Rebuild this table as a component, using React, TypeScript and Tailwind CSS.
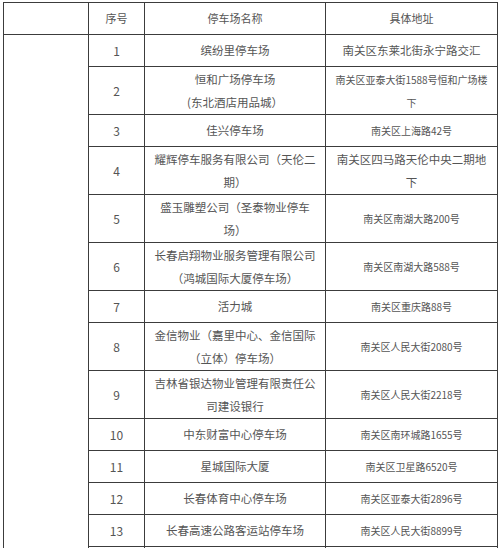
import React from "react";

type Row = {
  no: string;
  name: React.ReactNode;
  addr: React.ReactNode;
  big?: boolean;
  tall?: boolean;
};

const rows: Row[] = [
  { no: "1", name: "缤纷里停车场", addr: "南关区东莱北街永宁路交汇", big: true },
  {
    no: "2",
    name: (
      <>
        恒和广场停车场
        <br />
        (东北酒店用品城）
      </>
    ),
    addr: (
      <>
        南关区亚泰大街1588号恒和广场楼
        <br />下
      </>
    ),
    tall: true,
  },
  { no: "3", name: "佳兴停车场", addr: "南关区上海路42号" },
  {
    no: "4",
    name: (
      <>
        耀辉停车服务有限公司（天伦二
        <br />
        期）
      </>
    ),
    addr: (
      <>
        南关区四马路天伦中央二期地
        <br />下
      </>
    ),
    big: true,
    tall: true,
  },
  {
    no: "5",
    name: (
      <>
        盛玉雕塑公司（圣泰物业停车
        <br />
        场）
      </>
    ),
    addr: "南关区南湖大路200号",
    tall: true,
  },
  {
    no: "6",
    name: (
      <>
        长春启翔物业服务管理有限公司
        <br />
        （鸿城国际大厦停车场）
      </>
    ),
    addr: "南关区南湖大路588号",
    tall: true,
  },
  { no: "7", name: "活力城", addr: "南关区重庆路88号" },
  {
    no: "8",
    name: (
      <>
        金信物业（嘉里中心、金信国际
        <br />
        （立体）停车场）
      </>
    ),
    addr: "南关区人民大街2080号",
    tall: true,
  },
  {
    no: "9",
    name: (
      <>
        吉林省银达物业管理有限责任公
        <br />
        司建设银行
      </>
    ),
    addr: "南关区人民大街2218号",
    tall: true,
  },
  { no: "10", name: "中东财富中心停车场", addr: "南关区南环城路1655号" },
  { no: "11", name: "星城国际大厦", addr: "南关区卫星路6520号" },
  { no: "12", name: "长春体育中心停车场", addr: "南关区亚泰大街2896号" },
  { no: "13", name: "长春高速公路客运站停车场", addr: "南关区人民大街8899号" },
];

const cell = "border border-[#3c3c3c] text-center align-middle p-0";

export default function App() {
  return (
    <div
      className="w-[500px] h-[548px] overflow-hidden bg-white"
      style={{ fontFamily: '"Noto Sans CJK SC", "Noto Sans", sans-serif' }}
    >
      <table className="ml-[3px] mt-[2px] w-[494px] table-fixed border-collapse text-[#555]">
        <colgroup>
          <col className="w-[85px]" />
          <col className="w-[56px]" />
          <col className="w-[181px]" />
          <col className="w-[172px]" />
        </colgroup>
        <tbody>
          <tr className="h-[32px]">
            <td className={cell}></td>
            <td className={`${cell} text-[11px]`}>序号</td>
            <td className={`${cell} text-[11px]`}>停车场名称</td>
            <td className={`${cell} text-[11px]`}>具体地址</td>
          </tr>
          {rows.map((r, i) => (
            <tr key={r.no} className={r.tall ? "h-[48px]" : "h-[32px]"}>
              {i === 0 && <td className={cell} rowSpan={rows.length + 1}></td>}
              <td className={`${cell} text-[12px]`}>{r.no}</td>
              <td className={`${cell} text-[11.5px] leading-[23px]`}>{r.name}</td>
              <td
                className={`${cell} ${r.big ? "text-[11.5px]" : "text-[10px]"} leading-[23px]`}
              >
                {r.addr}
              </td>
            </tr>
          ))}
          <tr className="h-[32px]">
            <td className={cell}></td>
            <td className={cell}></td>
            <td className={cell}></td>
          </tr>
        </tbody>
      </table>
    </div>
  );
}
